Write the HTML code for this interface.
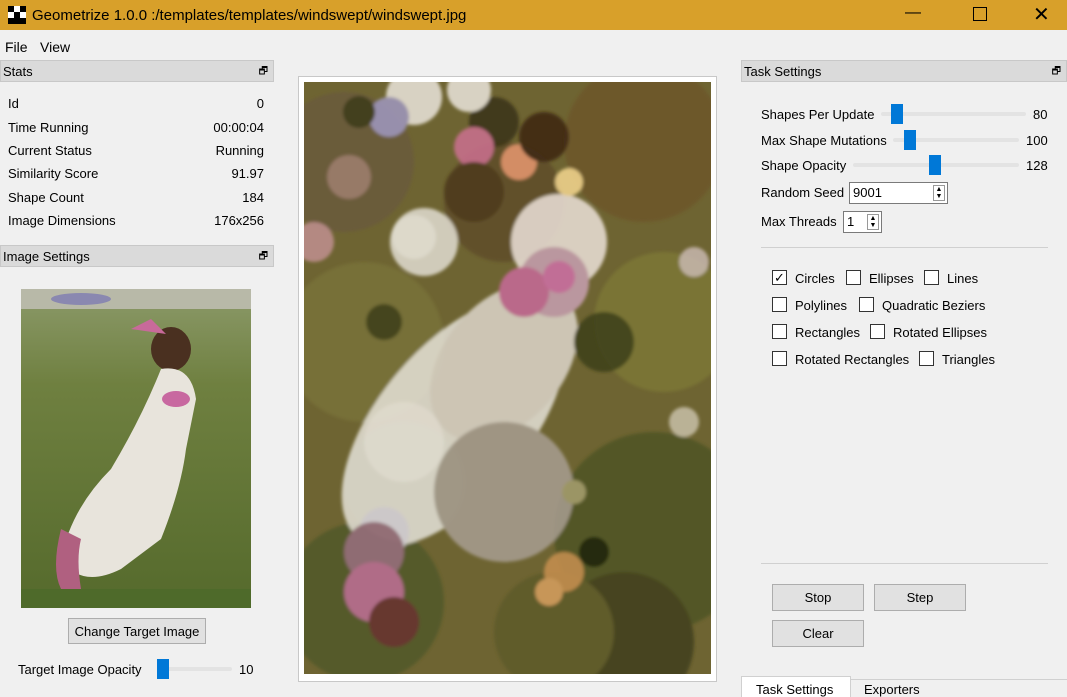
<!DOCTYPE html>
<html><head><meta charset="utf-8"><style>
*{margin:0;padding:0;box-sizing:border-box}
body{width:1067px;height:697px;background:#f0f0f0;font-family:"Liberation Sans",sans-serif;font-size:13px;color:#000;position:relative;overflow:hidden}
.a{position:absolute;white-space:nowrap}
.hdr{position:absolute;height:22px;background:#dadada;border:1px solid #c8c8c8;padding:3px 2px;font-size:13px}
.hdr i{position:absolute;right:5px;top:3px;font-style:normal;font-size:10px}
.btn{position:absolute;background:#e1e1e1;border:1px solid #adadad;text-align:center;line-height:26px}
.cb{position:absolute;width:15px;height:15px;border:1px solid #333;background:#fff}
.tr{position:absolute;height:4px;background:#e3e3e3;border-radius:2px}
.th{position:absolute;width:12px;height:20px;background:#0078d7}
.sp{position:absolute;height:22px;background:#fff;border:1px solid #7a7a7a;padding:2px 3px}
.sp b{position:absolute;right:2px;top:2px;width:12px;height:16px;border:1px solid #999;font-size:7px;line-height:7px;text-align:center;font-weight:normal}
</style></head><body>
<div class="a" style="left:0;top:0;width:1067px;height:30px;background:#d8a02a"></div>
<svg class="a" style="left:8px;top:6px" width="18" height="18"><rect width="18" height="18" fill="#fff"/><rect x="0" y="0" width="6" height="6" fill="#000"/><rect x="12" y="0" width="6" height="6" fill="#000"/><rect x="6" y="6" width="6" height="6" fill="#000"/><rect x="0" y="12" width="6" height="6" fill="#000"/><rect x="12" y="12" width="6" height="6" fill="#000"/><rect x="6" y="12" width="6" height="6" fill="#000"/></svg>
<div class="a" style="left:32px;top:7px;font-size:15px">Geometrize 1.0.0 :/templates/templates/windswept/windswept.jpg</div>
<div class="a" style="left:905px;top:4px;font-size:16px">—</div>
<div class="a" style="left:973px;top:7px;width:14px;height:14px;border:1px solid #000"></div>
<div class="a" style="left:1033px;top:2px;font-size:20px">✕</div>
<div class="a" style="left:5px;top:39px;font-size:14px">File</div><div class="a" style="left:40px;top:39px;font-size:14px">View</div>

<div class="hdr" style="left:0;top:60px;width:274px">Stats<i>🗗</i></div>
<div class="a" style="left:8px;top:96px">Id</div><div class="a" style="right:803px;top:96px">0</div>
<div class="a" style="left:8px;top:120px">Time Running</div><div class="a" style="right:803px;top:120px">00:00:04</div>
<div class="a" style="left:8px;top:143px">Current Status</div><div class="a" style="right:803px;top:143px">Running</div>
<div class="a" style="left:8px;top:166px">Similarity Score</div><div class="a" style="right:803px;top:166px">91.97</div>
<div class="a" style="left:8px;top:190px">Shape Count</div><div class="a" style="right:803px;top:190px">184</div>
<div class="a" style="left:8px;top:213px">Image Dimensions</div><div class="a" style="right:803px;top:213px">176x256</div>
<div class="hdr" style="left:0;top:245px;width:274px">Image Settings<i>🗗</i></div>
<svg class="a" style="left:21px;top:289px" width="230" height="319">
<defs><linearGradient id="g" x1="0" y1="0" x2="0" y2="1"><stop offset="0" stop-color="#8c9a6a"/><stop offset=".3" stop-color="#6f8040"/><stop offset="1" stop-color="#556a2c"/></linearGradient></defs>
<rect width="230" height="319" fill="url(#g)"/>
<rect x="0" y="0" width="230" height="20" fill="#b8b9a8"/>
<ellipse cx="60" cy="10" rx="30" ry="6" fill="#8a88b0"/>
<ellipse cx="150" cy="60" rx="20" ry="22" fill="#4a3020"/>
<path d="M110 40 L130 30 L145 45 Z" fill="#c86a9a"/>
<path d="M140 80 Q170 75 175 110 L165 160 Q160 200 140 250 L100 280 Q60 300 40 270 Q50 220 90 180 Q120 130 140 80Z" fill="#e8e4dc"/>
<ellipse cx="155" cy="110" rx="14" ry="8" fill="#c868a0"/>
<path d="M40 240 Q30 280 40 300 L60 300 Q55 270 60 250Z" fill="#b06080"/>
<rect x="0" y="300" width="230" height="19" fill="#4e6a2a"/>
</svg>
<div class="btn" style="left:68px;top:618px;width:138px;height:26px">Change Target Image</div>
<div class="a" style="left:18px;top:662px">Target Image Opacity</div>
<div class="tr" style="left:157px;top:667px;width:75px"></div><div class="th" style="left:157px;top:659px"></div>
<div class="a" style="left:239px;top:662px">10</div>

<div class="a" style="left:298px;top:76px;width:419px;height:606px;background:#fff;border:1px solid #c8c8c8"></div>
<svg class="a" style="left:304px;top:82px" width="407" height="592">
<defs><filter id="b"><feGaussianBlur stdDeviation="1.5"/></filter></defs>
<rect width="407" height="592" fill="#6e6432"/>
<g filter="url(#b)">
<g opacity=".75">
<circle cx="40" cy="80" r="70" fill="#6a5a3c"/><circle cx="340" cy="60" r="80" fill="#6e5428"/>
<circle cx="60" cy="260" r="80" fill="#7a7438"/><circle cx="360" cy="240" r="70" fill="#7e7a36"/>
<circle cx="350" cy="450" r="100" fill="#4a5220"/><circle cx="60" cy="520" r="80" fill="#4e5626"/>
<circle cx="200" cy="120" r="60" fill="#5e4a28"/><circle cx="100" cy="400" r="60" fill="#6c7042"/>
<circle cx="320" cy="560" r="70" fill="#3a3a18"/><circle cx="250" cy="550" r="60" fill="#5c5828"/>
</g>
<g opacity=".85">
<ellipse cx="150" cy="340" rx="75" ry="150" transform="rotate(40 150 340)" fill="#e6e2d8"/>
<ellipse cx="200" cy="280" rx="60" ry="90" transform="rotate(40 200 280)" fill="#ddd6cc"/>
<circle cx="255" cy="160" r="48" fill="#ede2da"/>
<circle cx="250" cy="200" r="35" fill="#c8a0b2"/>
<circle cx="220" cy="210" r="25" fill="#c86a9a"/><circle cx="255" cy="195" r="16" fill="#d070a8"/>
<circle cx="120" cy="160" r="34" fill="#e2ddd2"/><circle cx="110" cy="155" r="22" fill="#f0eee6"/>
<circle cx="200" cy="410" r="70" fill="#a89e92"/>
<circle cx="100" cy="360" r="40" fill="#f0ece4"/>
<circle cx="80" cy="450" r="25" fill="#ddd8e2"/><circle cx="70" cy="470" r="30" fill="#9a7080"/>
<circle cx="70" cy="510" r="30" fill="#c07098"/><circle cx="90" cy="540" r="25" fill="#6a3430"/>
<circle cx="190" cy="40" r="25" fill="#3a3418"/><circle cx="170" cy="65" r="20" fill="#cc7090"/>
<circle cx="215" cy="80" r="18" fill="#e89870"/><circle cx="240" cy="55" r="25" fill="#3e2612"/>
<circle cx="265" cy="100" r="14" fill="#f6d890"/>
<circle cx="110" cy="15" r="28" fill="#ece6dc"/><circle cx="165" cy="8" r="22" fill="#ece6dc"/>
<circle cx="85" cy="35" r="20" fill="#a098c0"/><circle cx="55" cy="30" r="16" fill="#3c3a18"/>
<circle cx="45" cy="95" r="22" fill="#a08070"/>
<circle cx="170" cy="110" r="30" fill="#4e3a1c"/>
<circle cx="80" cy="240" r="18" fill="#3c3c18"/><circle cx="300" cy="260" r="30" fill="#3e4018"/>
<circle cx="260" cy="490" r="20" fill="#c89050"/><circle cx="245" cy="510" r="14" fill="#d8a060"/>
<circle cx="290" cy="470" r="15" fill="#1e200c"/>
<circle cx="10" cy="160" r="20" fill="#c09090"/><circle cx="390" cy="180" r="15" fill="#c8b8b0"/>
<circle cx="270" cy="410" r="12" fill="#a8a070"/><circle cx="380" cy="340" r="15" fill="#c8c0a8"/>
</g></g>
</svg>

<div class="hdr" style="left:741px;top:60px;width:326px">Task Settings<i>🗗</i></div>
<div class="a" style="left:761px;top:107px">Shapes Per Update</div><div class="tr" style="left:881px;top:112px;width:145px"></div><div class="th" style="left:891px;top:104px"></div><div class="a" style="left:1033px;top:107px">80</div>
<div class="a" style="left:761px;top:133px">Max Shape Mutations</div><div class="tr" style="left:893px;top:138px;width:126px"></div><div class="th" style="left:904px;top:130px"></div><div class="a" style="left:1026px;top:133px">100</div>
<div class="a" style="left:761px;top:158px">Shape Opacity</div><div class="tr" style="left:853px;top:163px;width:166px"></div><div class="th" style="left:929px;top:155px"></div><div class="a" style="left:1026px;top:158px">128</div>
<div class="a" style="left:761px;top:185px">Random Seed</div><div class="sp" style="left:849px;top:182px;width:99px">9001<b>▲<br>▼</b></div>
<div class="a" style="left:761px;top:214px">Max Threads</div><div class="sp" style="left:843px;top:211px;width:39px">1<b>▲<br>▼</b></div>
<div class="a" style="left:761px;top:247px;width:287px;height:1px;background:#d0d0d0"></div>
<div class="cb" style="left:772px;top:270px;font-size:13px;line-height:13px;text-align:center">✓</div><div class="a" style="left:795px;top:271px">Circles</div>
<div class="cb" style="left:846px;top:270px"></div><div class="a" style="left:869px;top:271px">Ellipses</div>
<div class="cb" style="left:924px;top:270px"></div><div class="a" style="left:947px;top:271px">Lines</div>
<div class="cb" style="left:772px;top:297px"></div><div class="a" style="left:795px;top:298px">Polylines</div>
<div class="cb" style="left:859px;top:297px"></div><div class="a" style="left:882px;top:298px">Quadratic Beziers</div>
<div class="cb" style="left:772px;top:324px"></div><div class="a" style="left:795px;top:325px">Rectangles</div>
<div class="cb" style="left:870px;top:324px"></div><div class="a" style="left:893px;top:325px">Rotated Ellipses</div>
<div class="cb" style="left:772px;top:351px"></div><div class="a" style="left:795px;top:352px">Rotated Rectangles</div>
<div class="cb" style="left:919px;top:351px"></div><div class="a" style="left:942px;top:352px">Triangles</div>
<div class="a" style="left:761px;top:563px;width:287px;height:1px;background:#d0d0d0"></div>
<div class="btn" style="left:772px;top:584px;width:92px;height:27px">Stop</div>
<div class="btn" style="left:874px;top:584px;width:92px;height:27px">Step</div>
<div class="btn" style="left:772px;top:620px;width:92px;height:27px">Clear</div>
<div class="a" style="left:741px;top:676px;width:110px;height:21px;background:#fff;border:1px solid #d0d0d0;border-bottom:none"></div>
<div class="a" style="left:756px;top:682px">Task Settings</div>
<div class="a" style="left:851px;top:679px;width:216px;height:1px;background:#d0d0d0"></div>
<div class="a" style="left:864px;top:682px">Exporters</div>
</body></html>
